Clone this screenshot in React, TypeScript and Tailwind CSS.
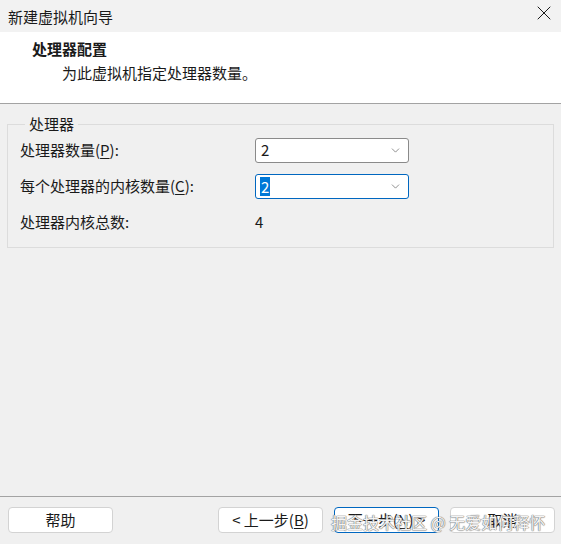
import { ChevronDown, X } from "lucide-react";

const font = { fontFamily: '"Segoe UI", "Noto Sans CJK SC", "Noto Sans", sans-serif' };

const Key = ({ k }: { k: string }) => <span className="underline underline-offset-2">{k}</span>;

const Combo = ({ value, focused }: { value: string; focused?: boolean }) => (
  <div
    className={`flex items-center justify-between w-[154px] h-[25px] pl-[4px] pr-[6px] bg-white rounded-[3px] border ${
      focused ? "border-[#0067c0]" : "border-[#8a8a8a]"
    }`}
  >
    {focused ? (
      <span className="bg-[#0078d7] text-white leading-[19px] px-[1px]">{value}</span>
    ) : (
      <span className="px-[1px]">{value}</span>
    )}
    <ChevronDown size={13} strokeWidth={1.2} className="text-[#555]" />
  </div>
);

const Btn = ({ children, primary }: { children: React.ReactNode; primary?: boolean }) => (
  <button
    className={`w-[105px] h-[26px] bg-white rounded-[4px] border text-[15px] whitespace-pre ${
      primary ? "border-[#0067c0]" : "border-[#d3d3d3]"
    }`}
  >
    {children}
  </button>
);

export default function App() {
  return (
    <div className="relative w-[561px] h-[544px] flex flex-col bg-[#f0f0f0] text-[15px] text-[#1a1a1a] overflow-hidden" style={font}>
      {/* title bar */}
      <div className="h-[32px] flex items-center justify-between pl-[8px] pr-[5px] bg-[#f2f2f2]">
        <span className="leading-none">新建虚拟机向导</span>
        <X size={24} strokeWidth={0.9} className="text-black -mt-[6px]" />
      </div>

      {/* header */}
      <div className="h-[72px] bg-white border-b border-[#a3a3a3] pl-[32px] pt-[7px]">
        <div className="font-bold leading-[20px]">处理器配置</div>
        <div className="pl-[30px] leading-[20px] mt-[4px]">为此虚拟机指定处理器数量。</div>
      </div>

      {/* body */}
      <div className="flex-1 px-[7px] pt-[10px]">
        <fieldset className="border border-[#dcdcdc] pl-[12px] pb-[7px] m-0">
          <legend className="ml-[5px] px-[4px] leading-[20px]">处理器</legend>
          <div className="grid grid-cols-[235px_154px] auto-rows-[36px] items-center -mt-[2px]">
            <span>
              处理器数量(<Key k="P" />):
            </span>
            <Combo value="2" />
            <span>
              每个处理器的内核数量(<Key k="C" />):
            </span>
            <Combo value="2" focused />
            <span>处理器内核总数:</span>
            <span>4</span>
          </div>
        </fieldset>
      </div>

      {/* footer */}
      <div className="border-t border-[#a3a3a3] h-[48px] flex items-center justify-between pl-[8px] pr-[6px] pb-[1px]">
        <Btn>帮助</Btn>
        <div className="flex gap-[11px]">
          <Btn>
            {"< 上一步("}
            <Key k="B" />)
          </Btn>
          <Btn primary>
            下一步(<Key k="N" />
            {") >"}
          </Btn>
          <Btn>取消</Btn>
        </div>
      </div>

      {/* watermark */}
      <div
        className="absolute left-[331px] top-[510px] text-[16px] text-[#f4f4f4] pointer-events-none whitespace-nowrap"
        style={{ textShadow: "0 0 1px #777, 0 0 1px #777, 0 0 1px #777" }}
      >
        掘金技术社区 @ 无爱如何释怀
      </div>
    </div>
  );
}
